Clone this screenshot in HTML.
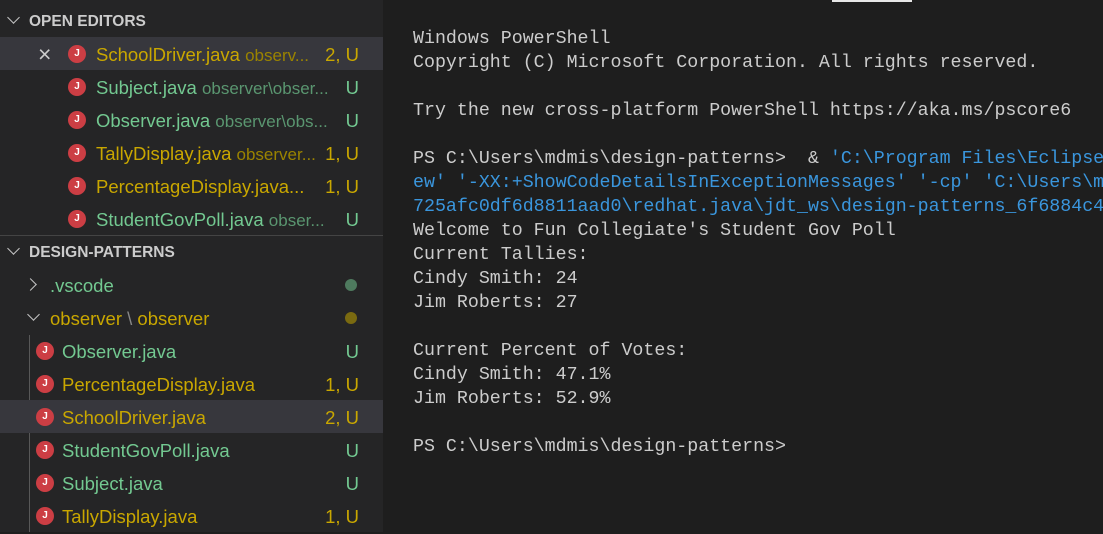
<!DOCTYPE html>
<html><head><style>
*{margin:0;padding:0;box-sizing:border-box}
body{width:1103px;height:532px;overflow:hidden;background:#1e1e1e;font-family:"Liberation Sans",sans-serif;position:relative}
#side{position:absolute;left:0;top:0;width:383px;height:532px;background:#252526}
.row{position:absolute;left:0;width:383px;height:33px;font-size:18.5px;line-height:35px;white-space:nowrap}
.hdr{color:#cccccc;font-weight:bold;font-size:15.5px}
.sel{background:#37373d}
.j{position:absolute;width:18px;height:18px;border-radius:50%;background:#cc3e44;top:8px;color:#fff;font-size:10px;line-height:18px;text-align:center;font-weight:bold}
.y{color:#c9a700}.g{color:#73c991}
.yd{color:#9a8300}.gd{color:#5a9670}
.b{position:absolute;right:24px}
.by{color:#c9a700}.bg{color:#73c991}
.t{position:absolute}
.chev{position:absolute;width:9px;height:9px;border-left:1.5px solid #c5c5c5;border-bottom:1.5px solid #c5c5c5}
#term{position:absolute;left:413px;top:27px;font-family:"Liberation Mono",monospace;font-size:18.3px;line-height:24px;color:#cccccc;white-space:pre}
.bl{color:#3a96dd}
.dot{position:absolute;width:12px;height:12px;border-radius:50%;top:11px;left:345px}
</style></head><body>
<div style="position:absolute;left:832px;top:0;width:80px;height:2px;background:#e7e7e7"></div>
<div id="side">
<div class="row hdr" style="top:4px"><span class="chev" style="left:9px;top:9px;transform:rotate(-45deg)"></span><span class="t" style="left:29px">OPEN EDITORS</span></div>
<div class="row sel" style="top:37px"><span class="t" style="left:38px;color:#ccc;font-size:23px">×</span><span class="j" style="left:68px">J</span><span class="t y" style="left:96px">SchoolDriver.java <span class="yd" style="font-size:17px">observ...</span></span><span class="b by">2, U</span></div>
<div class="row" style="top:70px"><span class="j" style="left:68px">J</span><span class="t g" style="left:96px">Subject.java <span class="gd" style="font-size:17px">observer\obser...</span></span><span class="b bg">U</span></div>
<div class="row" style="top:103px"><span class="j" style="left:68px">J</span><span class="t g" style="left:96px">Observer.java <span class="gd" style="font-size:17px">observer\obs...</span></span><span class="b bg">U</span></div>
<div class="row" style="top:136px"><span class="j" style="left:68px">J</span><span class="t y" style="left:96px">TallyDisplay.java <span class="yd" style="font-size:17px">observer...</span></span><span class="b by">1, U</span></div>
<div class="row" style="top:169px"><span class="j" style="left:68px">J</span><span class="t y" style="left:96px">PercentageDisplay.java...</span><span class="b by">1, U</span></div>
<div class="row" style="top:202px"><span class="j" style="left:68px">J</span><span class="t g" style="left:96px">StudentGovPoll.java <span class="gd" style="font-size:17px">obser...</span></span><span class="b bg">U</span></div>
<div style="position:absolute;left:0;top:235px;width:383px;height:1px;background:#444"></div>
<div class="row hdr" style="top:235px"><span class="chev" style="left:9px;top:9px;transform:rotate(-45deg)"></span><span class="t" style="left:29px">DESIGN-PATTERNS</span></div>
<div class="row" style="top:268px"><span class="chev" style="left:26px;top:12px;transform:rotate(-135deg)"></span><span class="t g" style="left:50px">.vscode</span><span class="dot" style="background:#4e7a5e"></span></div>
<div class="row" style="top:301px"><span class="chev" style="left:29px;top:9px;transform:rotate(-45deg)"></span><span class="t y" style="left:50px">observer<span style="color:#888"> \ </span>observer</span><span class="dot" style="background:#7a6a10"></span></div>
<div style="position:absolute;left:29px;top:335px;width:1px;height:197px;background:#585858"></div>
<div class="row" style="top:334px"><span class="j" style="left:36px">J</span><span class="t g" style="left:62px">Observer.java</span><span class="b bg">U</span></div>
<div class="row" style="top:367px"><span class="j" style="left:36px">J</span><span class="t y" style="left:62px">PercentageDisplay.java</span><span class="b by">1, U</span></div>
<div class="row sel" style="top:400px"><span class="j" style="left:36px">J</span><span class="t y" style="left:62px">SchoolDriver.java</span><span class="b by">2, U</span></div>
<div class="row" style="top:433px"><span class="j" style="left:36px">J</span><span class="t g" style="left:62px">StudentGovPoll.java</span><span class="b bg">U</span></div>
<div class="row" style="top:466px"><span class="j" style="left:36px">J</span><span class="t g" style="left:62px">Subject.java</span><span class="b bg">U</span></div>
<div class="row" style="top:499px"><span class="j" style="left:36px">J</span><span class="t y" style="left:62px">TallyDisplay.java</span><span class="b by">1, U</span></div>
</div>
<div id="term">Windows PowerShell
Copyright (C) Microsoft Corporation. All rights reserved.

Try the new cross-platform PowerShell https://aka.ms/pscore6

PS C:\Users\mdmis\design-patterns>  &amp; <span class="bl">'C:\Program Files\Eclipse</span>
<span class="bl">ew' '-XX:+ShowCodeDetailsInExceptionMessages' '-cp' 'C:\Users\m</span>
<span class="bl">725afc0df6d8811aad0\redhat.java\jdt_ws\design-patterns_6f6884c4</span>
Welcome to Fun Collegiate's Student Gov Poll
Current Tallies:
Cindy Smith: 24
Jim Roberts: 27

Current Percent of Votes:
Cindy Smith: 47.1%
Jim Roberts: 52.9%

PS C:\Users\mdmis\design-patterns></div>
</body></html>
